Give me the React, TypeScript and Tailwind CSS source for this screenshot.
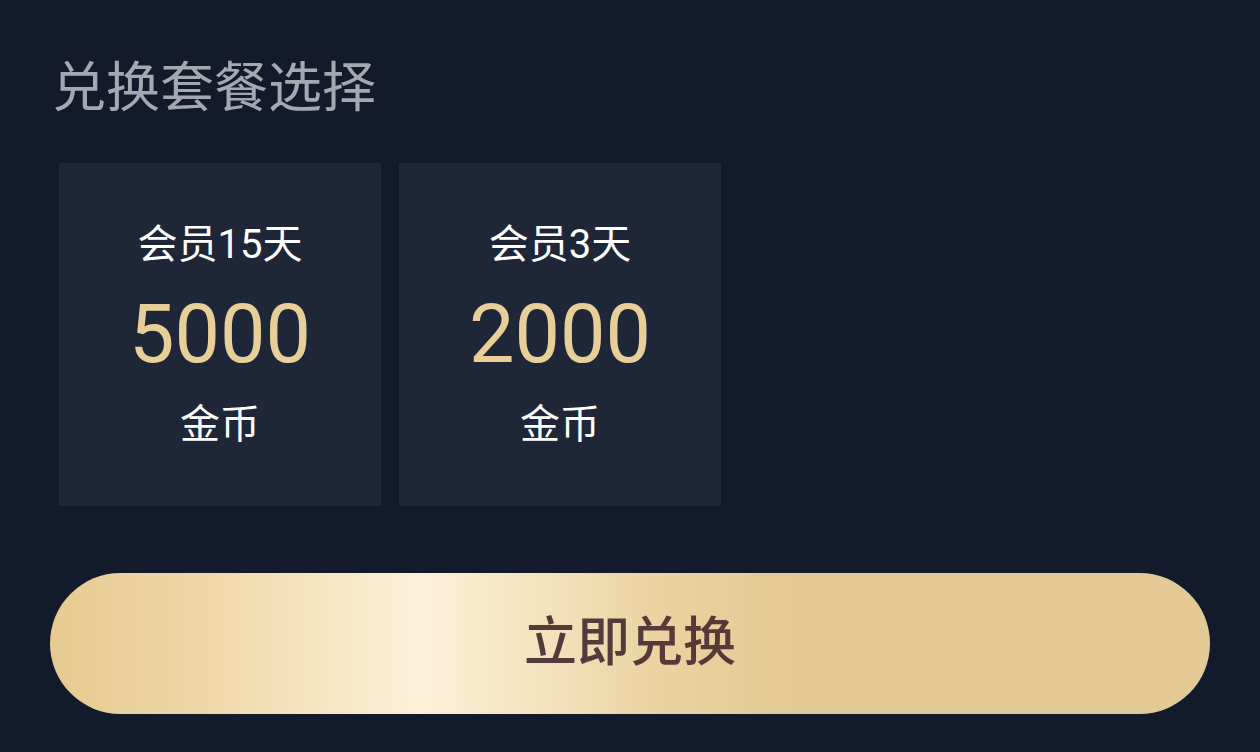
import React from 'react';

interface Plan {
    name: string;
    price: string;
}

const plans: Plan[] = [
    { name: '会员15天', price: '5000' },
    { name: '会员3天', price: '2000' },
];

const font = { fontFamily: 'Roboto, "Noto Sans CJK SC", sans-serif' };

export default function App() {
    return (
        <div className="w-[1260px] h-[752px] bg-[#121a2c] overflow-hidden" style={font}>
            {/* Title */}
            <div className="pt-[62px] pl-[52px]">
                <h2 className="text-[54px] leading-none text-[#a4a8b0]">兑换套餐选择</h2>
            </div>

            {/* Plans */}
            <div className="flex gap-[18px] pl-[59px] mt-[47px]">
                {plans.map((p) => (
                    <div
                        key={p.price}
                        className="w-[322px] h-[343px] bg-[#1e2638] flex flex-col items-center justify-center"
                    >
                        <div className="h-[90px] flex items-center text-[40px] leading-none text-white">{p.name}</div>
                        <div className="h-[90px] flex items-center text-[81px] leading-none text-[#e7cf97]">{p.price}</div>
                        <div className="h-[90px] flex items-center text-[40px] leading-none text-white">金币</div>
                    </div>
                ))}
            </div>

            {/* Action */}
            <div className="px-[50px] mt-[67px]">
                <button className="w-full h-[141px] rounded-full flex items-center justify-center bg-[linear-gradient(90deg,#e6ca90_0%,#efd8a9_14%,#f8e6c4_24%,#fdf0d9_32%,#f5e3bf_42%,#ebd3a2_52%,#e4cb95_62%,#e3ca94_100%)]">
                    <span className="text-[53px] leading-none font-medium text-[#56393a]">立即兑换</span>
                </button>
            </div>
        </div>
    );
}
